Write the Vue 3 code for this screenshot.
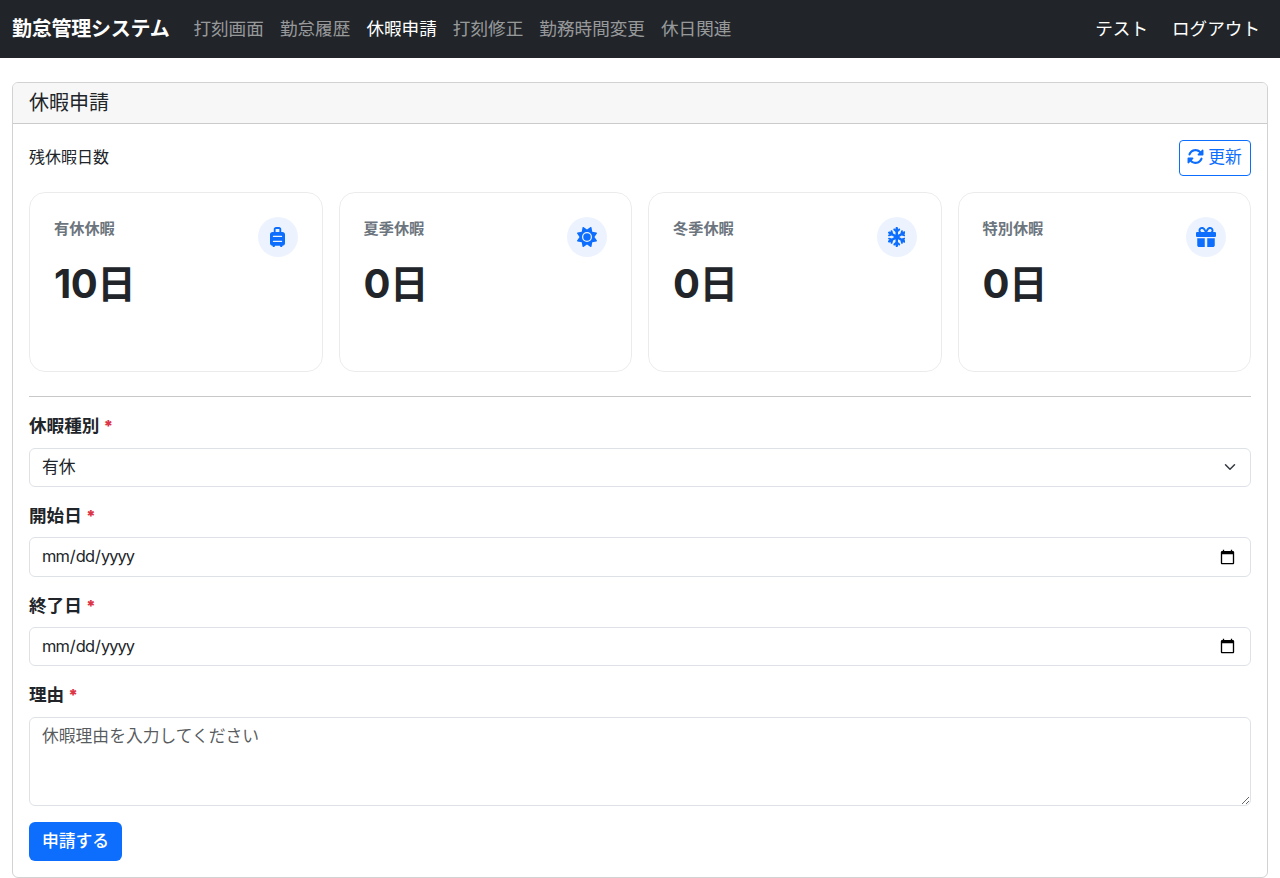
<script setup>
import { ref } from 'vue'

const navItems = [
  { label: '打刻画面' },
  { label: '勤怠履歴' },
  { label: '休暇申請', active: true },
  { label: '打刻修正' },
  { label: '勤務時間変更' },
  { label: '休日関連' },
]

const balances = [
  {
    label: '有休休暇',
    days: 10,
    viewBox: '0 0 384 512',
    path: 'M144 56c0-4.4 3.6-8 8-8h80c4.4 0 8 3.6 8 8v72H144V56zm176 72H288V56c0-30.9-25.1-56-56-56H152C121.1 0 96 25.1 96 56v72H64c-35.3 0-64 28.7-64 64V416c0 35.3 28.7 64 64 64c0 17.7 14.3 32 32 32s32-14.3 32-32H256c0 17.7 14.3 32 32 32s32-14.3 32-32c35.3 0 64-28.7 64-64V192c0-35.3-28.7-64-64-64zM88 224H296c8.8 0 16 7.2 16 16s-7.2 16-16 16H88c-8.8 0-16-7.2-16-16s7.2-16 16-16zm0 128H296c8.8 0 16 7.2 16 16s-7.2 16-16 16H88c-8.8 0-16-7.2-16-16s7.2-16 16-16z',
  },
  {
    label: '夏季休暇',
    days: 0,
    viewBox: '0 0 512 512',
    path: 'M361.5 1.2c5 2.1 8.6 6.6 9.6 11.9L391 121l107.9 19.8c5.3 1 9.8 4.6 11.9 9.6s1.5 10.7-1.6 15.2L446.9 256l62.3 90.3c3.1 4.5 3.7 10.2 1.6 15.2s-6.6 8.6-11.9 9.6L391 391 371.1 498.9c-1 5.3-4.6 9.8-9.6 11.9s-10.7 1.5-15.2-1.6L256 446.9l-90.3 62.3c-4.5 3.1-10.2 3.7-15.2 1.6s-8.6-6.6-9.6-11.9L121 391 13.1 371.1c-5.3-1-9.8-4.6-11.9-9.6s-1.5-10.7 1.6-15.2L65.1 256 2.8 165.7c-3.1-4.5-3.7-10.2-1.6-15.2s6.6-8.6 11.9-9.6L121 121 140.9 13.1c1-5.3 4.6-9.8 9.6-11.9s10.7-1.5 15.2 1.6L256 65.1 346.3 2.8c4.5-3.1 10.2-3.7 15.2-1.6zM160 256a96 96 0 1 1 192 0 96 96 0 1 1 -192 0zm224 0a128 128 0 1 0 -256 0 128 128 0 1 0 256 0z',
  },
  {
    label: '冬季休暇',
    days: 0,
    viewBox: '0 0 448 512',
    path: 'M224 0c17.7 0 32 14.3 32 32V62.1l15-15c9.4-9.4 24.6-9.4 33.9 0s9.4 24.6 0 33.9l-49 49v70.3l61.4-35.8 17.7-66.1c3.4-12.8 16.6-20.4 29.4-17s20.4 16.6 17 29.4l-5.2 19.3 23.6-13.8c15.3-8.9 34.9-3.7 43.8 11.5s3.8 34.9-11.5 43.8l-25.3 14.8 21.7 5.8c12.8 3.4 20.4 16.6 17 29.4s-16.6 20.4-29.4 17l-67.7-18.1L287.5 256l60.9 35.5 67.7-18.1c12.8-3.4 26 4.2 29.4 17s-4.2 26-17 29.4l-21.7 5.8 25.3 14.8c15.3 8.9 20.4 28.5 11.5 43.8s-28.5 20.4-43.8 11.5l-23.6-13.8 5.2 19.3c3.4 12.8-4.2 26-17 29.4s-26-4.2-29.4-17l-17.7-66.1L256 311.7v70.3l49 49c9.4 9.4 9.4 24.6 0 33.9s-24.6 9.4-33.9 0l-15-15V480c0 17.7-14.3 32-32 32s-32-14.3-32-32V449.9l-15 15c-9.4 9.4-24.6 9.4-33.9 0s-9.4-24.6 0-33.9l49-49V311.7l-61.4 35.8-17.7 66.1c-3.4 12.8-16.6 20.4-29.4 17s-20.4-16.6-17-29.4l5.2-19.3L48.1 395.6c-15.3 8.9-34.9 3.7-43.8-11.5s-3.7-34.9 11.5-43.8l25.3-14.8-21.7-5.8c-12.8-3.4-20.4-16.6-17-29.4s16.6-20.4 29.4-17l67.7 18.1L160.5 256 99.6 220.5 31.9 238.6c-12.8 3.4-26-4.2-29.4-17s4.2-26 17-29.4l21.7-5.8L15.9 171.6C.6 162.7-4.5 143.1 4.4 127.9s28.5-20.4 43.8-11.5l23.6 13.8-5.2-19.3c-3.4-12.8 4.2-26 17-29.4s26 4.2 29.4 17l17.7 66.1L192 200.3V129.9L143 81c-9.4-9.4-9.4-24.6 0-33.9s24.6-9.4 33.9 0l15 15V32c0-17.7 14.3-32 32-32z',
  },
  {
    label: '特別休暇',
    days: 0,
    viewBox: '0 0 512 512',
    path: 'M190.5 68.8L225.3 128H224 152c-22.1 0-40-17.9-40-40s17.9-40 40-40h2.2c14.9 0 28.8 7.9 36.3 20.8zM64 88c0 14.4 3.5 28 9.6 40H32c-17.7 0-32 14.3-32 32v64c0 17.7 14.3 32 32 32H480c17.7 0 32-14.3 32-32V160c0-17.7-14.3-32-32-32H438.4c6.1-12 9.6-25.6 9.6-40c0-48.6-39.4-88-88-88h-2.2c-31.9 0-61.5 16.9-77.7 44.4L256 85.5l-24.1-41C215.7 16.9 186.1 0 154.2 0H152C103.4 0 64 39.4 64 88zm336 0c0 22.1-17.9 40-40 40H288h-1.3l34.8-59.2C329.1 55.9 342.9 48 357.8 48H360c22.1 0 40 17.9 40 40zM32 288V464c0 26.5 21.5 48 48 48H224V288H32zM288 512H432c26.5 0 48-21.5 48-48V288H288V512z',
  },
]

const type = ref('有休')
const startDate = ref('')
const endDate = ref('')
const reason = ref('')
</script>

<template>
  <div class="page">
    <header class="navbar">
      <a class="brand">勤怠管理システム</a>
      <nav class="links">
        <a v-for="item in navItems" :key="item.label" class="link" :class="{ active: item.active }">{{ item.label }}</a>
      </nav>
      <div class="account">
        <a class="link active">テスト</a>
        <a class="link active">ログアウト</a>
      </div>
    </header>

    <main class="card">
      <h1 class="card-header">休暇申請</h1>
      <div class="card-body">
        <div class="summary-head">
          <span class="summary-title">残休暇日数</span>
          <button type="button" class="refresh">
            <svg class="refresh-icon" viewBox="0 0 512 512" fill="currentColor">
              <path d="M142.9 142.9c62.2-62.2 162.7-62.5 225.3-1L327 183c-6.9 6.9-8.9 17.2-5.2 26.2s12.5 14.8 22.2 14.8H472c13.3 0 24-10.7 24-24V72c0-9.7-5.8-18.5-14.8-22.2s-19.3-1.7-26.2 5.2L413.4 96.6c-87.6-86.5-228.7-86.2-315.8 1C73.2 122 55.6 150.7 44.8 181.4c-5.9 16.7 2.9 34.9 19.5 40.8s34.9-2.9 40.8-19.5c7.7-21.8 20.2-42.3 37.8-59.8zM16 312V440c0 9.7 5.8 18.5 14.8 22.2s19.3 1.7 26.2-5.2l41.6-41.6c87.6 86.5 228.7 86.2 315.8-1c24.4-24.4 42.1-53.1 52.9-83.7c5.9-16.7-2.9-34.9-19.5-40.8s-34.9 2.9-40.8 19.5c-7.7 21.8-20.2 42.3-37.8 59.8c-62.2 62.2-162.7 62.5-225.3 1L185 329c6.9-6.9 8.9-17.2 5.2-26.2s-12.5-14.8-22.2-14.8H40c-13.3 0-24 10.7-24 24z" />
            </svg>
            <span>更新</span>
          </button>
        </div>

        <section class="balances">
          <article v-for="b in balances" :key="b.label" class="balance">
            <div>
              <div class="balance-label">{{ b.label }}</div>
              <div class="balance-days">{{ b.days }}<span class="unit">日</span></div>
            </div>
            <span class="balance-icon">
              <svg :viewBox="b.viewBox" height="20" fill="currentColor"><path :d="b.path" /></svg>
            </span>
          </article>
        </section>

        <form class="form" @submit.prevent>
          <div class="field">
            <label for="type">休暇種別 <span class="required">*</span></label>
            <div class="select-wrap">
              <select id="type" v-model="type" class="control select">
                <option>有休</option>
                <option>夏季</option>
                <option>冬季</option>
                <option>特別</option>
              </select>
              <svg class="chevron" viewBox="0 0 16 16" width="16" height="12" fill="none" stroke="#343a40" stroke-width="2" stroke-linecap="round" stroke-linejoin="round">
                <path d="m2 5 6 6 6-6" />
              </svg>
            </div>
          </div>
          <div class="field">
            <label for="start">開始日 <span class="required">*</span></label>
            <input id="start" v-model="startDate" type="date" class="control date" />
          </div>
          <div class="field">
            <label for="end">終了日 <span class="required">*</span></label>
            <input id="end" v-model="endDate" type="date" class="control date" />
          </div>
          <div class="field">
            <label for="reason">理由 <span class="required">*</span></label>
            <textarea id="reason" v-model="reason" class="control reason" rows="3" placeholder="休暇理由を入力してください"></textarea>
          </div>
          <button type="submit" class="submit">申請する</button>
        </form>
      </div>
    </main>
  </div>
</template>

<style>
body {
  margin: 0;
  background: #fff;
}
</style>

<style scoped>
.page,
.page * {
  box-sizing: border-box;
}
.page {
  color: #212529;
  font: 400 16px/1.5 Inter, 'Noto Sans CJK JP', sans-serif;
}
.navbar {
  display: flex;
  align-items: center;
  height: 58px;
  padding: 0 12px;
  background: #212529;
  white-space: nowrap;
}
.brand {
  margin-right: 16px;
  color: #fff;
  font-size: 20px;
  font-weight: 700;
  line-height: 30px;
  letter-spacing: -0.25px;
}
.links,
.account {
  display: flex;
}
.links {
  gap: 0.1px;
}
.account {
  margin-left: auto;
  gap: 8px;
}
.link {
  padding: 0 8px;
  color: rgba(255, 255, 255, 0.55);
  font-size: 17.6px;
  line-height: 26.4px;
}
.link.active {
  color: #fff;
}
.card {
  height: 796px;
  margin: 24px 12px 0;
  border: 1px solid rgba(0, 0, 0, 0.175);
  border-radius: 6px;
}
.card-header {
  height: 41px;
  margin: 0;
  padding: 8px 16px;
  border-bottom: 1px solid rgba(0, 0, 0, 0.175);
  border-radius: 5px 5px 0 0;
  background: #f7f7f7;
  font-size: 20px;
  font-weight: 400;
  line-height: 24px;
}
.card-body {
  padding: 16px;
}
.summary-head {
  display: flex;
  align-items: center;
  justify-content: space-between;
  margin-bottom: 16px;
}
.summary-title {
  padding-bottom: 2px;
}
.refresh {
  display: flex;
  align-items: center;
  justify-content: center;
  gap: 4px;
  width: 72px;
  height: 36px;
  padding: 0 1px 0 0;
  border: 1px solid #0d6efd;
  border-radius: 4px;
  background: transparent;
  color: #0d6efd;
  font: inherit;
  font-size: 16.8px;
}
.refresh-icon {
  width: 17px;
  height: 17px;
  margin-bottom: 3px;
}
.balances {
  display: grid;
  grid-template-columns: repeat(4, 1fr);
  gap: 16px;
  margin-bottom: 24px;
}
.balance {
  display: flex;
  align-items: flex-start;
  justify-content: space-between;
  height: 180px;
  padding: 24px;
  border: 1px solid rgba(0, 0, 0, 0.08);
  border-radius: 16px;
}
.balance-label {
  color: #6c757d;
  font-size: 15.2px;
  font-weight: 700;
  line-height: 23px;
}
.balance-days {
  height: 48px;
  margin-top: 20px;
  font-size: 40px;
  font-weight: 700;
  line-height: 48px;
  letter-spacing: -0.5px;
}
.unit {
  font-size: 38.5px;
}
.balance-icon {
  display: flex;
  align-items: center;
  justify-content: center;
  width: 40px;
  height: 40px;
  border-radius: 50%;
  background: #ecf3ff;
  color: #0d6efd;
}
.form {
  padding-top: 16.45px;
  border-top: 1px solid #c7c8c9;
}
.field {
  margin-bottom: 16px;
}
label {
  display: block;
  height: 26.4px;
  margin-bottom: 8px;
  font-size: 17.6px;
  font-weight: 700;
  line-height: 26.4px;
}
.required {
  color: #dc3545;
  font-size: 16px;
  font-weight: 900;
}
.control {
  display: block;
  width: 100%;
  height: 39.2px;
  margin: 0;
  padding: 6px 12px;
  border: 1px solid #dee2e6;
  border-radius: 6px;
  background: #fff;
  color: #212529;
  font: inherit;
  font-size: 16.8px;
  line-height: 25.2px;
  outline: none;
}
.select-wrap {
  display: grid;
  align-items: center;
}
.select-wrap > * {
  grid-area: 1 / 1;
}
.select {
  appearance: none;
}
.chevron {
  justify-self: end;
  margin-right: 13px;
  pointer-events: none;
}
.control.date {
  padding-left: 11px;
}
.date::-webkit-datetime-edit {
  font-size: 16.4px;
  letter-spacing: -0.95px;
}
.control.reason {
  height: 89.2px;
  resize: vertical;
}
.reason::placeholder {
  color: rgba(33, 37, 41, 0.75);
}
.submit {
  display: block;
  width: 93px;
  height: 39.2px;
  padding: 0;
  border: 0;
  border-radius: 6px;
  background: #0d6efd;
  color: #fff;
  font: inherit;
  font-size: 16.8px;
  font-weight: 500;
}
</style>
